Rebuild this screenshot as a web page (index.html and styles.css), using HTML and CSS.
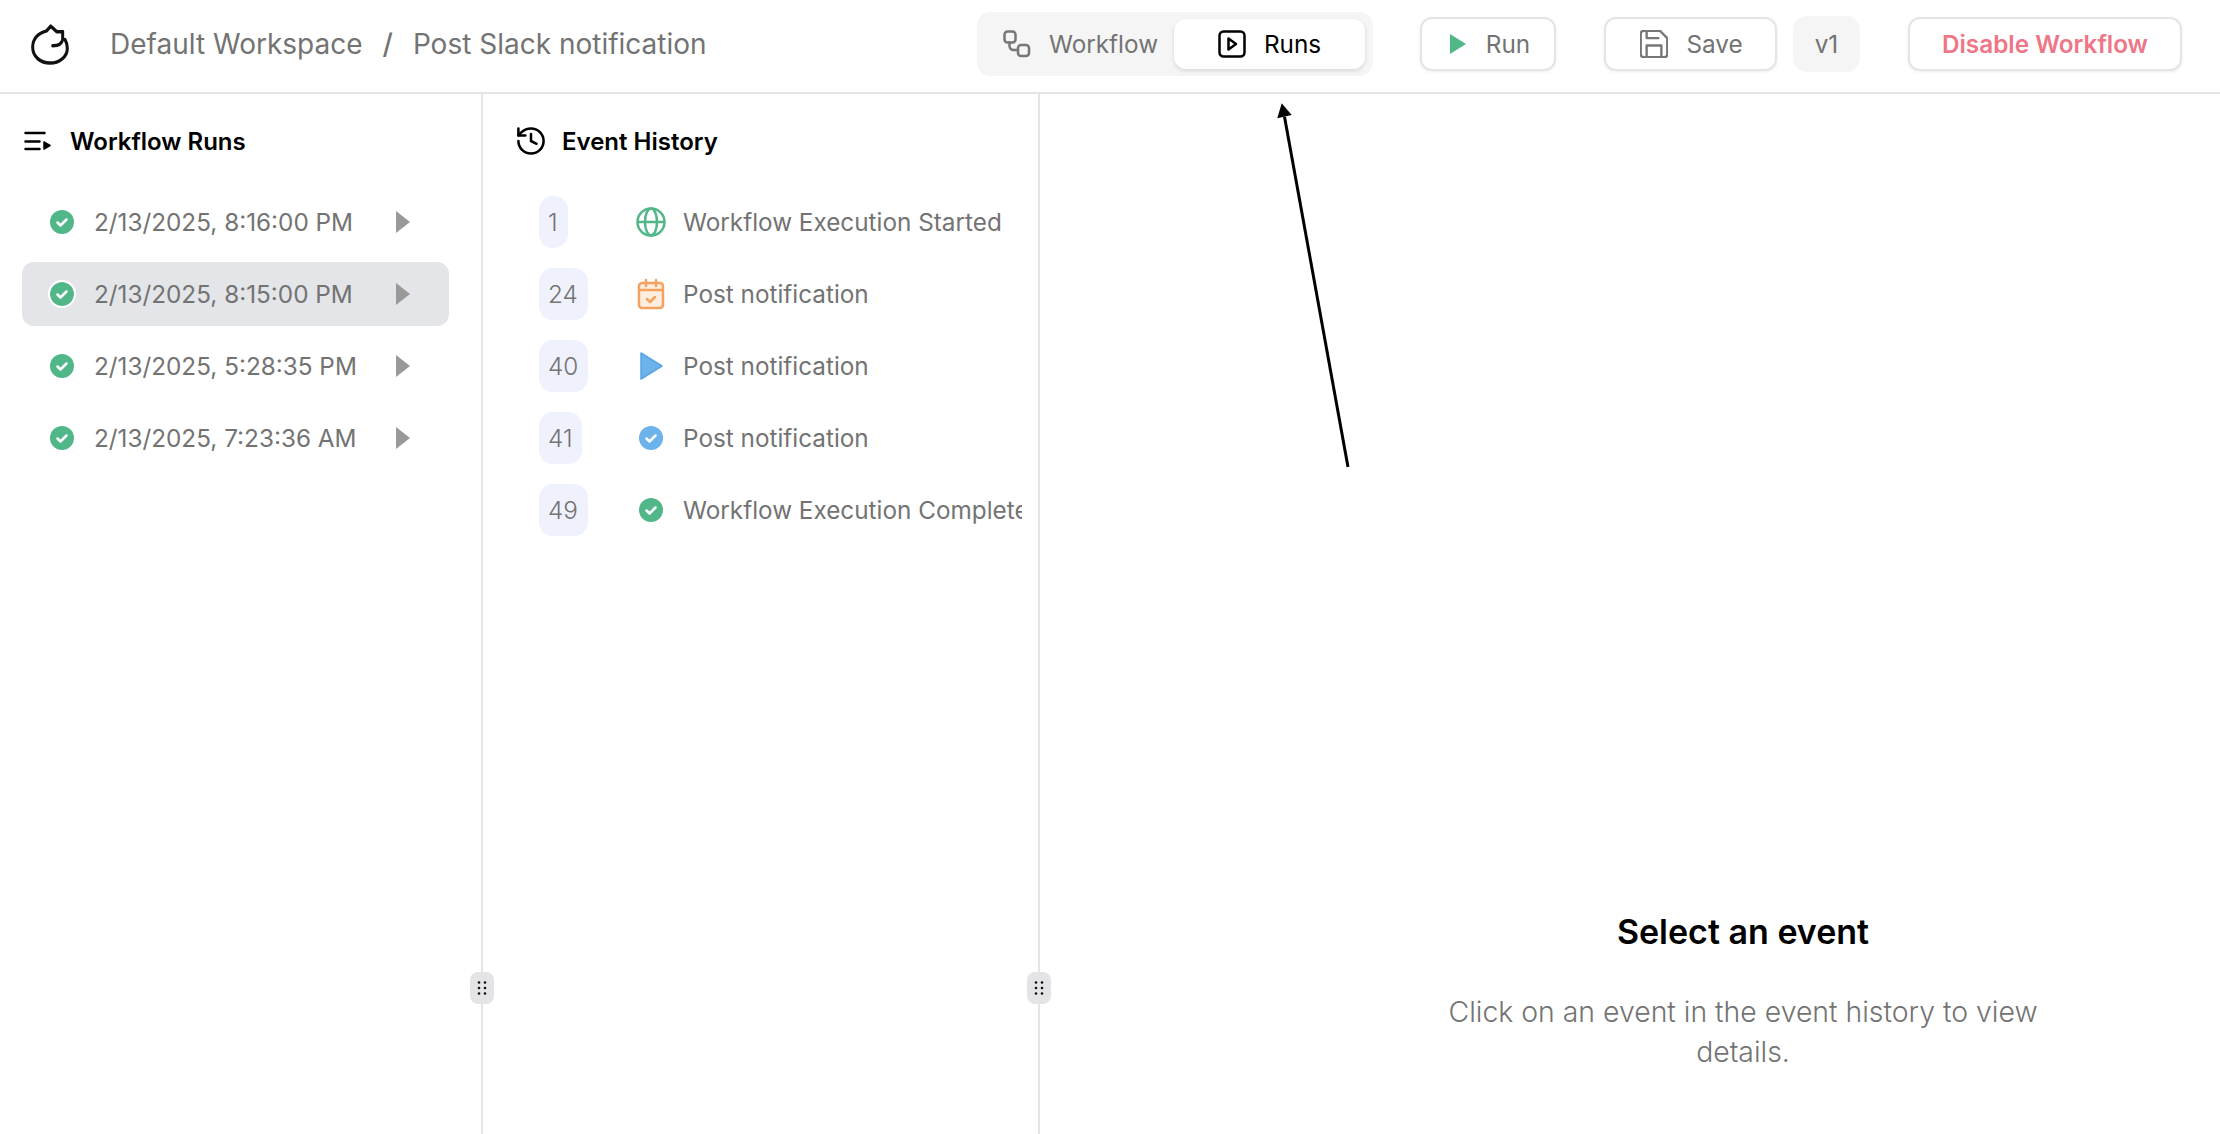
FILE: index.html
```html
<!DOCTYPE html>
<html lang="en">
<head>
    <meta charset="UTF-8">
    <title>Post Slack notification</title>
    <link rel="stylesheet" href="styles.css">
</head>
<body>
<header class="topbar">
    <svg class="logo" width="40" height="44" viewBox="20 20 120 112" preserveAspectRatio="none" fill="none" stroke="#111" stroke-width="9" stroke-linecap="round" stroke-linejoin="round">
        <path d="M118 42L100 42L82 28L70 40C45 46 28 60 28 82C28 106 52 122 80 122C108 122 132 106 132 84C132 76 129 68 125 62"/>
        <path d="M118 42L118 62C116 72 104 78 88 78"/>
    </svg>
    <nav class="crumbs">
        <span>Default Workspace</span>
        <span class="crumb-sep">/</span>
        <span>Post Slack notification</span>
    </nav>
    <div class="tabs">
        <div class="tab tab-workflow">
            <svg width="28" height="28" viewBox="0 0 28 28" fill="none" stroke="#777" stroke-width="2.500" stroke-linecap="round" stroke-linejoin="round"><rect x="1.500" y="1.500" width="11" height="11" rx="3"/><rect x="15" y="15" width="11" height="11" rx="3"/><path d="M6.500 12.500v3.500a4 4 0 0 0 4 4h4.500"/></svg>
            <span>Workflow</span>
        </div>
        <div class="tab tab-active">
            <svg width="28" height="28" viewBox="0 0 28 28" fill="none" stroke="#000" stroke-width="2.500" stroke-linecap="round" stroke-linejoin="round"><rect x="1.500" y="1.500" width="25" height="25" rx="4"/><path d="M10.500 8.500l7.500 5.500-7.500 5.500z"/></svg>
            <span>Runs</span>
        </div>
    </div>
    <button class="btn btn-run">
        <svg width="18" height="20" viewBox="0 0 18 20"><path d="M1 0l16 10L1 20z" fill="#52b788"/></svg>
        <span>Run</span>
    </button>
    <button class="btn btn-save">
        <svg width="28" height="28" viewBox="2.500 2.500 19 19" fill="none" stroke="#777" stroke-width="1.600" stroke-linecap="round" stroke-linejoin="round"><path d="M5 3h11l5 5v11a2 2 0 0 1-2 2H5a2 2 0 0 1-2-2V5a2 2 0 0 1 2-2z"/><path d="M17 21v-8H7v8"/><path d="M7 3v5h8"/></svg>
        <span>Save</span>
    </button>
    <div class="version">v1</div>
    <button class="btn btn-disable">Disable Workflow</button>
</header>

<main class="panels">
    <section class="panel panel-runs">
        <h2 class="panel-title">
            <svg width="28" height="20" viewBox="0 0 28 20" fill="none" stroke="#000" stroke-width="2.500" stroke-linecap="round"><path d="M1.500 2h19M1.500 10.500h14M1.500 18h14"/><path d="M20 11l6 3.500-6 3.500z" fill="#000" stroke-width="1.500" stroke-linejoin="round"/></svg>
            <span>Workflow Runs</span>
        </h2>
        <ul class="run-list">
            <li class="run">
                <svg class="check" width="24" height="24" viewBox="0 0 24 24"><circle cx="12" cy="12" r="12" fill="#52b788"/><path d="M7.500 12.500l3 3 6-6" fill="none" stroke="#fff" stroke-width="2.500" stroke-linecap="round" stroke-linejoin="round"/></svg>
                <span class="run-date">2/13/2025, 8:16:00 PM</span>
                <svg class="run-play" width="14" height="22" viewBox="0 0 14 22"><path d="M0 0l14 11L0 22z" fill="#999"/></svg>
            </li>
            <li class="run run-active">
                <svg class="check" width="24" height="24" viewBox="0 0 24 24"><circle cx="12" cy="12" r="12" fill="#52b788"/><path d="M7.500 12.500l3 3 6-6" fill="none" stroke="#fff" stroke-width="2.500" stroke-linecap="round" stroke-linejoin="round"/></svg>
                <span class="run-date">2/13/2025, 8:15:00 PM</span>
                <svg class="run-play" width="14" height="22" viewBox="0 0 14 22"><path d="M0 0l14 11L0 22z" fill="#999"/></svg>
            </li>
            <li class="run">
                <svg class="check" width="24" height="24" viewBox="0 0 24 24"><circle cx="12" cy="12" r="12" fill="#52b788"/><path d="M7.500 12.500l3 3 6-6" fill="none" stroke="#fff" stroke-width="2.500" stroke-linecap="round" stroke-linejoin="round"/></svg>
                <span class="run-date">2/13/2025, 5:28:35 PM</span>
                <svg class="run-play" width="14" height="22" viewBox="0 0 14 22"><path d="M0 0l14 11L0 22z" fill="#999"/></svg>
            </li>
            <li class="run">
                <svg class="check" width="24" height="24" viewBox="0 0 24 24"><circle cx="12" cy="12" r="12" fill="#52b788"/><path d="M7.500 12.500l3 3 6-6" fill="none" stroke="#fff" stroke-width="2.500" stroke-linecap="round" stroke-linejoin="round"/></svg>
                <span class="run-date">2/13/2025, 7:23:36 AM</span>
                <svg class="run-play" width="14" height="22" viewBox="0 0 14 22"><path d="M0 0l14 11L0 22z" fill="#999"/></svg>
            </li>
        </ul>
        <div class="handle"><svg width="10" height="16" viewBox="0 0 10 16" fill="#111"><circle cx="2" cy="2.500" r="1.300"/><circle cx="8" cy="2.500" r="1.300"/><circle cx="2" cy="8" r="1.300"/><circle cx="8" cy="8" r="1.300"/><circle cx="2" cy="13.500" r="1.300"/><circle cx="8" cy="13.500" r="1.300"/></svg></div>
    </section>

    <section class="panel panel-events">
        <h2 class="panel-title">
            <svg width="28" height="28" viewBox="2 2 20 20" fill="none" stroke="#000" stroke-width="1.800" stroke-linecap="round" stroke-linejoin="round"><path d="M3 12a9 9 0 1 0 9-9 9.700 9.700 0 0 0-6.700 2.700L3 8"/><path d="M3 3v5h5"/><path d="M12 7v5l4 2"/></svg>
            <span>Event History</span>
        </h2>
        <ul class="event-list">
            <li class="event">
                <span class="event-chip-col"><span class="chip">1</span></span>
                <svg class="event-icon" width="32" height="32" viewBox="0 0 32 32" fill="none" stroke="#52b788" stroke-width="2.500"><circle cx="16" cy="16" r="13.500"/><ellipse cx="16" cy="16" rx="6" ry="13.500"/><path d="M3 16h26"/></svg>
                <span class="event-name">Workflow Execution Started</span>
            </li>
            <li class="event">
                <span class="event-chip-col"><span class="chip">24</span></span>
                <svg class="event-icon" width="32" height="32" viewBox="0 0 32 32" fill="none" stroke="#f4a261" stroke-width="2.500" stroke-linecap="round" stroke-linejoin="round"><rect x="4" y="5" width="24" height="25" rx="3" fill="#fdeedd"/><path d="M4 12h24M11 2v6M21 2v6"/><path d="M12 21l3 3 5-5"/></svg>
                <span class="event-name">Post notification</span>
            </li>
            <li class="event">
                <span class="event-chip-col"><span class="chip">40</span></span>
                <svg class="event-icon" width="32" height="32" viewBox="0 0 32 32"><path d="M6 3l21 13L6 29z" fill="#6cb2eb" stroke="#5aa5e5" stroke-width="1.500" stroke-linejoin="round"/></svg>
                <span class="event-name">Post notification</span>
            </li>
            <li class="event">
                <span class="event-chip-col"><span class="chip">41</span></span>
                <svg class="event-icon" width="32" height="32" viewBox="0 0 32 32"><circle cx="16" cy="16" r="12" fill="#6cb2eb"/><path d="M11.500 16.500l3 3 6-6" fill="none" stroke="#fff" stroke-width="2.500" stroke-linecap="round" stroke-linejoin="round"/></svg>
                <span class="event-name">Post notification</span>
            </li>
            <li class="event">
                <span class="event-chip-col"><span class="chip">49</span></span>
                <svg class="event-icon" width="32" height="32" viewBox="0 0 32 32"><circle cx="16" cy="16" r="12" fill="#52b788"/><path d="M11.500 16.500l3 3 6-6" fill="none" stroke="#fff" stroke-width="2.500" stroke-linecap="round" stroke-linejoin="round"/></svg>
                <span class="event-name">Workflow Execution Completed</span>
            </li>
        </ul>
        <div class="handle"><svg width="10" height="16" viewBox="0 0 10 16" fill="#111"><circle cx="2" cy="2.500" r="1.300"/><circle cx="8" cy="2.500" r="1.300"/><circle cx="2" cy="8" r="1.300"/><circle cx="8" cy="8" r="1.300"/><circle cx="2" cy="13.500" r="1.300"/><circle cx="8" cy="13.500" r="1.300"/></svg></div>
    </section>

    <section class="panel-detail">
        <h3 class="detail-title">Select an event</h3>
        <p class="detail-text">Click on an event in the event history to view details.</p>
    </section>
</main>

<svg class="arrow" width="90" height="380" viewBox="0 0 90 380">
    <path d="M78 367L14.500 16.700" stroke="#000" stroke-width="3" fill="none"/>
    <path d="M11.700 3.300L7.300 18.300L21.700 15z" fill="#000"/>
</svg>
</body>
</html>
```

FILE: styles.css
```css
* {
    box-sizing: border-box;
}

html, body {
    height: 100%;
}

body {
    margin: 0;
    display: flex;
    flex-direction: column;
    overflow: hidden;
    background: #fff;
    color: #737373;
    font-family: Inter, "Liberation Sans", sans-serif;
    font-size: 24.3px;
}

.topbar {
    display: flex;
    align-items: center;
    flex: none;
    height: 94px;
    padding: 0 38px 4px 30px;
    border-bottom: 2px solid #e5e5e5;
}

.logo {
    flex: none;
    margin-top: 2px;
}

.crumbs {
    display: flex;
    gap: 20px;
    flex: none;
    width: 867px;
    margin-left: 40px;
    font-size: 28px;
    white-space: nowrap;
}

.crumb-sep {
    font-weight: 500;
}

.tabs {
    display: flex;
    align-items: center;
    flex: none;
    width: 396px;
    height: 64px;
    padding: 0 8px 0 0;
    border-radius: 14px;
    background: #f5f5f5;
}

.tab {
    display: flex;
    align-items: center;
    justify-content: center;
    gap: 18px;
    height: 50px;
    width: 197px;
    flex: none;
}

.tab-workflow {
    padding-left: 10px;
}

.tab-active {
    width: 191px;
    border-radius: 12px;
    background: #fff;
    color: #000;
    box-shadow: 0 2px 4px rgba(0, 0, 0, 0.12);
}

.btn {
    display: flex;
    align-items: center;
    justify-content: center;
    flex: none;
    height: 54px;
    border: 2px solid #e5e5e5;
    border-radius: 12px;
    background: #fff;
    color: #737373;
    font-family: inherit;
    font-size: inherit;
    box-shadow: 0 1px 3px rgba(0, 0, 0, 0.08);
}

.btn-run {
    gap: 19px;
    width: 136px;
    margin-left: 47px;
    padding-left: 9px;
}

.btn-save {
    gap: 18px;
    width: 173px;
    margin-left: 48px;
    padding-left: 8px;
}

.version {
    display: flex;
    align-items: center;
    justify-content: center;
    flex: none;
    width: 67px;
    height: 56px;
    margin-left: 16px;
    border-radius: 14px;
    background: #f5f5f5;
}

.btn-disable {
    width: 274px;
    margin-left: 48px;
    color: #ee7686;
    font-weight: 600;
}

.panels {
    display: flex;
    flex: 1;
    min-height: 0;
}

.panel {
    position: relative;
    flex: none;
    border-right: 2px solid #e5e5e5;
}

.panel-runs {
    width: 483px;
    padding: 0 32px 0 22px;
}

.panel-events {
    width: 557px;
    padding: 0 16px 0 34px;
}

.panel-title {
    display: flex;
    align-items: center;
    gap: 18px;
    height: 94px;
    margin: 0;
    color: #000;
    font-size: 24px;
    font-weight: 600;
}

.panel-runs .panel-title {
    padding-left: 2px;
}

.panel-events .panel-title {
    gap: 17px;
}

.run-list, .event-list {
    margin: 0;
    padding: 0;
    list-style: none;
}

.run-list {
    margin-top: 2px;
}

.run {
    display: flex;
    align-items: center;
    height: 64px;
    margin-bottom: 8px;
    padding-left: 28px;
    border-radius: 12px;
}

.run-active {
    background: #e4e5e9;
}

.run-active .check {
    border-radius: 50%;
    box-shadow: 0 0 0 2px #fff;
}

.run-date {
    flex: none;
    width: 302px;
    margin-left: 20px;
    white-space: nowrap;
}

.event-list {
    display: flex;
    flex-direction: column;
    gap: 20px;
    margin-top: 8px;
    overflow: hidden;
}

.event {
    display: flex;
    align-items: center;
    height: 52px;
    overflow: hidden;
    white-space: nowrap;
}

.event-chip-col {
    flex: none;
    width: 118px;
    padding-left: 22px;
}

.chip {
    display: inline-flex;
    align-items: center;
    height: 52px;
    padding: 0 10px 0 9px;
    border-radius: 14px;
    background: #eff1fd;
    font-weight: 300;
}

.event-icon {
    flex: none;
}

.event-name {
    margin-left: 16px;
}

.panel-detail {
    flex: 1;
    padding: 818px 0 0 226px;
    text-align: center;
}

.detail-title {
    margin: 0;
    color: #000;
    font-size: 34px;
    font-weight: 600;
    line-height: 40px;
}

.detail-text {
    width: 604px;
    margin: 40px auto 0;
    font-size: 28.4px;
    line-height: 40px;
    font-weight: 300;
}

.handle {
    position: absolute;
    top: 878px;
    right: -13px;
    display: flex;
    align-items: center;
    justify-content: center;
    width: 24px;
    height: 32px;
    border-radius: 8px;
    background: #e4e4e7;
}

.arrow {
    position: absolute;
    top: 100px;
    left: 1270px;
}
```
